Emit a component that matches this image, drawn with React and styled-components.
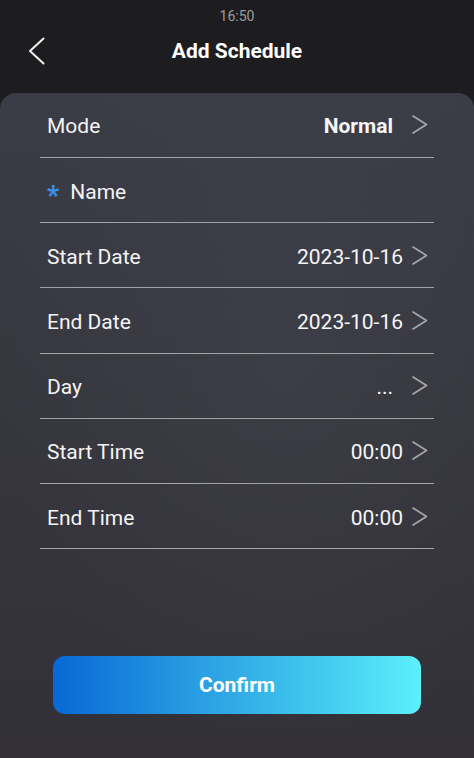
import React from "react";
import styled, { createGlobalStyle } from "styled-components";

const GlobalStyle = createGlobalStyle`
  html, body {
    margin: 0;
    padding: 0;
    background: #1d1d1f;
  }
  body {
    font-family: Roboto, "Liberation Sans", sans-serif;
    -webkit-font-smoothing: antialiased;
  }
`;

const rows = [
  { label: "Mode", value: "Normal", bold: true, arrow: true, gap: 19 },
  { label: "Name", required: true },
  { label: "Start Date", value: "2023-10-16", arrow: true, gap: 9 },
  { label: "End Date", value: "2023-10-16", arrow: true, gap: 9 },
  { label: "Day", value: "...", arrow: true, gap: 19 },
  { label: "Start Time", value: "00:00", arrow: true, gap: 9 },
  { label: "End Time", value: "00:00", arrow: true, gap: 9 },
];

function Chevron() {
  return (
    <svg width="16" height="19" viewBox="0 0 16 19" fill="none">
      <path
        d="M1 1L14.5 9.5L1 18"
        stroke="currentColor"
        strokeWidth="1.6"
        strokeLinecap="round"
        strokeLinejoin="round"
      />
    </svg>
  );
}

export default function App() {
  return (
    <Screen>
      <GlobalStyle />
      <StatusBar>16:50</StatusBar>
      <Header>
        <BackButton type="button">
          <svg width="17" height="28" viewBox="0 0 17 28" fill="none">
            <path
              d="M15.5 1.5L2 14L15.5 26.5"
              stroke="currentColor"
              strokeWidth="2"
              strokeLinecap="round"
              strokeLinejoin="round"
            />
          </svg>
        </BackButton>
        <Title>Add Schedule</Title>
      </Header>
      <Panel>
        <List>
          {rows.map((row, i) => (
            <Row key={row.label} $first={i === 0}>
              <Label>
                {row.required && <Star>*</Star>}
                {row.label}
              </Label>
              {row.arrow && (
                <Value $bold={row.bold}>
                  {row.value}
                  <Arrow $gap={row.gap}>
                    <Chevron />
                  </Arrow>
                </Value>
              )}
            </Row>
          ))}
        </List>
        <ConfirmButton type="button">Confirm</ConfirmButton>
      </Panel>
    </Screen>
  );
}

const Screen = styled.div`
  width: 474px;
  height: 758px;
  display: flex;
  flex-direction: column;
  background: #1d1d1f;
  overflow: hidden;
`;

const StatusBar = styled.div`
  height: 32px;
  display: flex;
  align-items: center;
  justify-content: center;
  color: #9c9c9e;
  font-size: 14px;
`;

const Header = styled.div`
  position: relative;
  height: 38px;
  display: flex;
  align-items: center;
  justify-content: center;
  margin-bottom: 23px;
`;

const BackButton = styled.button`
  position: absolute;
  left: 28px;
  top: 5px;
  padding: 0;
  border: none;
  background: none;
  color: #f2f2f2;
  display: flex;
`;

const Title = styled.h1`
  margin: 0;
  color: #ffffff;
  font-size: 21px;
  font-weight: 700;
`;

const Panel = styled.div`
  flex: 1;
  display: flex;
  flex-direction: column;
  border-radius: 16px 16px 0 0;
  background: radial-gradient(
      ellipse at 60% 40%,
      rgba(70, 72, 82, 0.35),
      rgba(0, 0, 0, 0) 70%
    ),
    linear-gradient(180deg, #3a3c46 0%, #36363e 50%, #333037 100%);
`;

const List = styled.div`
  padding: 0 40px;
  display: flex;
  flex-direction: column;
`;

const Row = styled.div`
  height: ${(p) => (p.$first ? 65 : 65.2)}px;
  box-sizing: border-box;
  padding: ${(p) => (p.$first ? 1 : 3)}px 6px 0 7px;
  display: flex;
  align-items: center;
  justify-content: space-between;
  border-bottom: 1.5px solid #a3a3a6;
`;

const Label = styled.span`
  color: #f4f4f4;
  font-size: 21px;
  display: flex;
  align-items: center;
`;

const Star = styled.span`
  color: #3b8fe8;
  font-size: 27px;
  font-weight: 700;
  line-height: 1;
  margin-right: 11px;
  margin-top: 10px;
`;

const Value = styled.span`
  color: #f6f6f6;
  font-size: 21px;
  font-weight: ${(p) => (p.$bold ? 700 : 400)};
  display: flex;
  align-items: center;
`;

const Arrow = styled.span`
  color: #a8a8ac;
  display: flex;
  margin-left: ${(p) => p.$gap}px;
  margin-top: -3px;
`;

const ConfirmButton = styled.button`
  margin: 107px 53px 0 53px;
  height: 58px;
  border: none;
  border-radius: 12px;
  background: linear-gradient(90deg, #0868d6 0%, #2a9fe2 40%, #44cdef 75%, #5cf0fc 100%);
  color: #ffffff;
  font-family: Roboto, "Liberation Sans", sans-serif;
  font-size: 21px;
  font-weight: 700;
`;
